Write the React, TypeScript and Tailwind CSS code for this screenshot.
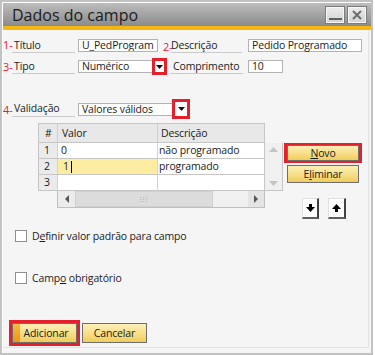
import React from 'react';

function Prefix({ n }: { n: string }) {
  return <span className="w-[9px] shrink-0 text-[11px] leading-none text-[#e8202a]">{n}</span>;
}

function DropArrow() {
  return (
    <svg width="7" height="4" viewBox="0 0 7 4">
      <path d="M0 0h7L3.5 4z" fill="#111" />
    </svg>
  );
}

function GoldButton({ children, w, h }: { children: React.ReactNode; w: string; h: string }) {
  return (
    <div
      className={`${w} ${h} flex items-center justify-center border border-[#6e6e6e] bg-gradient-to-b from-[#fcefb8] via-[#f8df8a] to-[#f1cc56] leading-none text-[#1b1b1b]`}
    >
      {children}
    </div>
  );
}

function WinBtn({ children }: { children: React.ReactNode }) {
  return (
    <div className="w-[20px] h-[18px] flex items-center justify-center border border-[#7c7c7c] bg-gradient-to-b from-[#ececec] to-[#d2d2d2] shadow-[inset_0_0_0_1px_#f6f6f6]">
      {children}
    </div>
  );
}

export default function App() {
  return (
    <div className="w-[375px] h-[355px] bg-white font-['Open_Sans','Noto_Sans',sans-serif] text-[#1b1b1b]">
      <div className="w-[373px] h-[355px] border-2 border-[#c2c2c2] flex flex-col">
        <div className="flex-1 flex flex-col pt-[1px] pl-[1px]">
          {/* Title bar */}
          <div className="h-[23px] flex items-center justify-between pl-[9px] pr-[4px] bg-gradient-to-b from-[#bdbdbd] to-[#8b8b8b]">
            <span className="text-[16px] leading-none text-[#1c1c1c]">Dados do campo</span>
            <div className="flex gap-[2px]">
              <WinBtn>
                <div className="w-[13px] h-[2px] bg-[#5f5f5f] mt-[9px]" />
              </WinBtn>
              <WinBtn>
                <svg width="10" height="10" viewBox="0 0 10 10">
                  <path d="M1 1L9 9M9 1L1 9" stroke="#6d6d6d" strokeWidth="2" />
                </svg>
              </WinBtn>
            </div>
          </div>
          <div className="h-[4px] bg-[#f5b60f]" />

          {/* Body */}
          <div className="flex-1 flex bg-[#f5f5f5] pr-[2px] pb-[5px]">
            <div className="flex-1 flex flex-col border-r border-b border-[#e3e3e3] pt-[9px] text-[10.5px] tracking-[-0.15px] leading-none">
              {/* Row 1 */}
              <div className="h-[14px] flex items-start">
                <Prefix n="1-" />
                <div className="w-[63px] h-[14px] flex items-center pl-[2px] border-b border-[#cbcbcb]">Título</div>
                <div className="ml-[3px] w-[80px] h-[13px] flex items-center bg-white border border-[#b3b3b3] pl-[3px] overflow-hidden whitespace-nowrap">
                  U_PedProgram
                </div>
                <div className="ml-[5px] w-[8px] shrink-0 text-[11px] text-[#e8202a] h-[14px] flex items-center">2-</div>
                <div className="w-[71px] h-[14px] flex items-center border-b border-[#cbcbcb]">Descrição</div>
                <div className="ml-[6px] w-[114px] h-[13px] flex items-center bg-white border border-[#b3b3b3] pl-[3px] whitespace-nowrap">
                  Pedido Programado
                </div>
              </div>

              {/* Row 2 */}
              <div className="mt-[5px] h-[17px] flex items-center">
                <Prefix n="3-" />
                <div className="w-[63px] h-[15px] flex items-center pl-[2px] border-b border-[#cbcbcb]">Tipo</div>
                <div className="ml-[3px] w-[74px] h-[13px] flex items-center bg-white border-l border-t border-b border-[#b3b3b3] pl-[3px]">
                  Numérico
                </div>
                <div className="w-[15px] h-[17px] border-[3px] border-[#e5202b] bg-white flex items-center justify-center">
                  <DropArrow />
                </div>
                <div className="ml-[3px] w-[73px] h-[15px] flex items-center pl-[3px] border-b border-[#cbcbcb]">Comprimento</div>
                <div className="ml-[5px] w-[35px] h-[13px] flex items-center bg-white border border-[#b3b3b3] pl-[3px]">10</div>
              </div>

              {/* Row 3 */}
              <div className="mt-[24px] h-[20px] flex items-center">
                <Prefix n="4-" />
                <div className="w-[63px] h-[15px] flex items-center pl-[2px] border-b border-[#cbcbcb]">Validação</div>
                <div className="ml-[3px] w-[94px] h-[13px] flex items-center bg-white border-l border-t border-b border-[#b3b3b3] pl-[3px]">
                  Valores válidos
                </div>
                <div className="w-[18px] h-[20px] border-[3px] border-[#e5202b] bg-white flex items-center justify-center">
                  <DropArrow />
                </div>
              </div>

              {/* Grid section */}
              <div className="mt-[4px] h-[96px] flex">
                <div className="ml-[35px] flex">
                  <div className="w-[227px] flex flex-col">
                    {/* header */}
                    <div className="h-[20px] flex border border-[#c6c6c6] bg-[#e8e8e8]">
                      <div className="w-[19px] border-r border-[#cfcfcf] flex items-center pl-[6px]">#</div>
                      <div className="w-[100px] border-r border-[#cfcfcf] flex items-center pl-[4px]">Valor</div>
                      <div className="flex-1 flex items-center pl-[3px]">Descrição</div>
                    </div>
                    {[
                      { n: '1', v: '0', d: 'não programado', hl: false },
                      { n: '2', v: '1', d: 'programado', hl: true },
                      { n: '3', v: '', d: '', hl: false },
                    ].map((r) => (
                      <div key={r.n} className="h-[16px] flex border-l border-r border-b border-[#c6c6c6]">
                        <div className="w-[19px] bg-[#ebebeb] border-r border-[#d2d2d2] flex items-center pl-[5px]">{r.n}</div>
                        <div
                          className={`w-[100px] border-r border-[#d2d2d2] flex items-center ${
                            r.hl ? 'bg-[#fdeda3] pl-[5px]' : 'bg-white pl-[3px]'
                          }`}
                        >
                          {r.v}
                          {r.hl && <span className="ml-[2px] w-[1px] h-[12px] bg-black" />}
                        </div>
                        <div className="flex-1 bg-white flex items-center pl-[1px]">{r.d}</div>
                      </div>
                    ))}
                    {/* horizontal scrollbar */}
                    <div className="h-[17px] flex">
                      <div className="w-[19px]" />
                      <div className="flex-1 flex border-l border-r border-b border-[#c0c0c0] bg-[#f0f0f0]">
                        <div className="w-[17px] flex items-center justify-center bg-[#ececec]">
                          <svg width="4" height="8" viewBox="0 0 4 8">
                            <path d="M4 0v8L0 4z" fill="#555" />
                          </svg>
                        </div>
                        <div className="w-[138px] flex items-center justify-center bg-[#dcdcdc] border border-[#d0d0d0]">
                          <span className="text-[7px] text-[#a8a8a8] tracking-[1px]">⁝⁝⁝</span>
                        </div>
                        <div className="flex-1" />
                        <div className="w-[16px] flex items-center justify-center bg-[#e4e4e4]">
                          <svg width="4" height="8" viewBox="0 0 4 8">
                            <path d="M0 0v8L4 4z" fill="#555" />
                          </svg>
                        </div>
                      </div>
                    </div>
                  </div>
                  {/* vertical scrollbar */}
                  <div className="w-[18px] flex flex-col">
                    <div className="h-[20px]" />
                    <div className="h-[48px] flex flex-col justify-between items-center py-[4px] bg-[#f0f0f0] border-r border-b border-[#c6c6c6]">
                      <svg width="9" height="5" viewBox="0 0 9 5">
                        <path d="M0 5h9L4.5 0z" fill="#c4c4c4" />
                      </svg>
                      <svg width="9" height="5" viewBox="0 0 9 5">
                        <path d="M0 0h9L4.5 5z" fill="#c4c4c4" />
                      </svg>
                    </div>
                  </div>
                </div>

                {/* right buttons */}
                <div className="ml-[1px] w-[78px] flex flex-col pt-[20px]">
                  <div className="h-[21px] border-x-[3px] border-y-[2px] border-[#e5202b] flex">
                    <GoldButton w="flex-1" h="h-full">
                      <span>
                        <u>N</u>ovo
                      </span>
                    </GoldButton>
                  </div>
                  <div className="mt-[2px] ml-[3px]">
                    <GoldButton w="w-[72px]" h="h-[18px]">
                      <span>
                        E<u>l</u>iminar
                      </span>
                    </GoldButton>
                  </div>
                  <div className="mt-[15px] h-[21px] flex pl-[18px] gap-[9px]">
                    <div className="w-[17px] h-[21px] flex items-center justify-center bg-white border-l border-t border-[#e0e0e0] border-r-2 border-b-2 border-r-[#404040] border-b-[#606060]">
                      <svg width="9" height="8" viewBox="0 0 9 8">
                        <path d="M3 0h3v3h3L4.5 8 0 3h3z" fill="#000" />
                      </svg>
                    </div>
                    <div className="w-[18px] h-[21px] flex items-center justify-center bg-white border-l border-t border-[#e0e0e0] border-r-2 border-b-2 border-r-[#404040] border-b-[#606060]">
                      <svg width="9" height="8" viewBox="0 0 9 8">
                        <path d="M4.5 0L9 5H6v3H3V5H0z" fill="#000" />
                      </svg>
                    </div>
                  </div>
                </div>
              </div>

              {/* Checkboxes */}
              <div className="mt-[10px] h-[14px] flex items-center pl-[12px]">
                <div className="w-[12px] h-[12px] bg-white border border-[#8e8e8e]" />
                <span className="ml-[5px]">
                  D<u>e</u>finir valor padrão para campo
                </span>
              </div>
              <div className="mt-[28px] h-[14px] flex items-center pl-[12px]">
                <div className="w-[12px] h-[12px] bg-white border border-[#8e8e8e]" />
                <span className="ml-[5px]">
                  Camp<u>o</u> obrigatório
                </span>
              </div>

              {/* Bottom buttons */}
              <div className="mt-[35px] flex items-start pl-[6px]">
                <div className="w-[71px] h-[26px] border-[3px] border-[#e5202b] flex">
                  <div className="flex-1 flex border border-[#6e6e6e]">
                    <div className="w-[7px] bg-gradient-to-b from-[#f8b83a] to-[#ef9416]" />
                    <div className="flex-1 flex items-center justify-center bg-gradient-to-b from-[#fcefb8] via-[#f8df8a] to-[#f1cc56] pr-[4px]">
                      Adicionar
                    </div>
                  </div>
                </div>
                <div className="ml-[2px] mt-[3px]">
                  <GoldButton w="w-[65px]" h="h-[20px]">
                    Cancelar
                  </GoldButton>
                </div>
              </div>
            </div>
          </div>
        </div>
      </div>
    </div>
  );
}
